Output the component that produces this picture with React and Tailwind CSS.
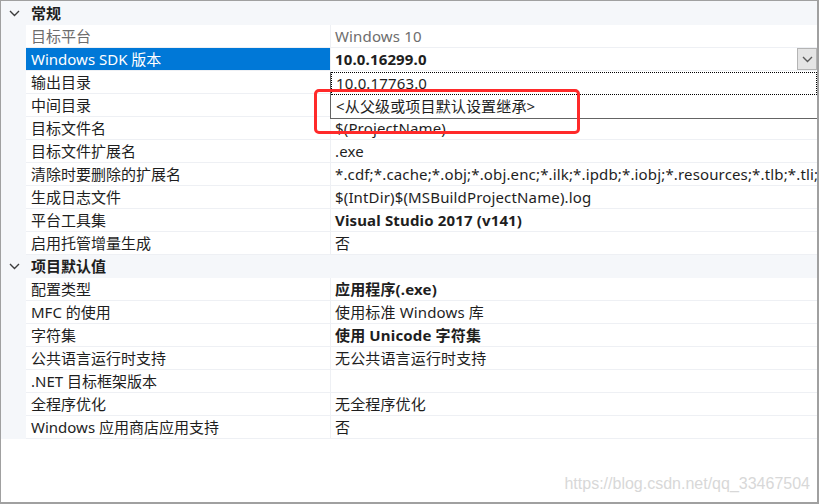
const font = { fontFamily: '"Noto Sans", "Noto Sans CJK SC", sans-serif' };

const general = [
  { label: "目标平台", value: "Windows 10", muted: true },
  { label: "Windows SDK 版本", value: "10.0.16299.0", bold: true, selected: true },
  { label: "输出目录", value: "" },
  { label: "中间目录", value: "" },
  { label: "目标文件名", value: "$(ProjectName)" },
  { label: "目标文件扩展名", value: ".exe" },
  {
    label: "清除时要删除的扩展名",
    value: "*.cdf;*.cache;*.obj;*.obj.enc;*.ilk;*.ipdb;*.iobj;*.resources;*.tlb;*.tli;*",
  },
  { label: "生成日志文件", value: "$(IntDir)$(MSBuildProjectName).log" },
  { label: "平台工具集", value: "Visual Studio 2017 (v141)", bold: true },
  { label: "启用托管增量生成", value: "否" },
];

const defaults = [
  { label: "配置类型", value: "应用程序(.exe)", bold: true },
  { label: "MFC 的使用", value: "使用标准 Windows 库" },
  { label: "字符集", value: "使用 Unicode 字符集", bold: true },
  { label: "公共语言运行时支持", value: "无公共语言运行时支持" },
  { label: ".NET 目标框架版本", value: "" },
  { label: "全程序优化", value: "无全程序优化" },
  { label: "Windows 应用商店应用支持", value: "否" },
];

function Chevron({ className }) {
  return (
    <svg className={className} width="11" height="7" viewBox="0 0 11 7">
      <path d="M1 1 L5.5 5.5 L10 1" fill="none" stroke="currentColor" strokeWidth="1.4" />
    </svg>
  );
}

function Section({ title }) {
  return (
    <div className="flex h-[23px] items-center bg-[#f5f7fa]">
      <div className="flex w-[25px] justify-center pl-[2px] text-[#3c3c3c]">
        <Chevron />
      </div>
      <div className="pl-[5px] text-[15px] font-bold text-[#1e1e1e]">{title}</div>
    </div>
  );
}

function Row({ item }) {
  return (
    <div className="flex h-[23px]">
      <div className="w-[25px] shrink-0 bg-[#f5f7fa]" />
      <div
        className={`flex w-[304px] shrink-0 items-center border-b border-[#eef0f4] pl-[5px] whitespace-nowrap ${
          item.selected
            ? "bg-[#0078d7] text-white"
            : item.muted
            ? "text-[#6d6d6d]"
            : "text-[#1e1e1e]"
        }`}
      >
        {item.label}
      </div>
      <div
        className={`relative flex min-w-0 flex-1 items-center overflow-hidden border-b border-l border-[#eef0f4] pl-[4px] whitespace-nowrap tracking-[0.15px] ${
          item.bold ? "font-bold" : ""
        } ${item.muted ? "text-[#6d6d6d]" : "text-[#1e1e1e]"}`}
      >
        {item.value}
        {item.selected && (
          <div className="absolute top-0 right-0 flex h-[22px] w-[20px] items-center justify-center border border-[#b4b4b4] bg-[#e5e5e5] text-[#5a5a5a]">
            <Chevron />
          </div>
        )}
      </div>
    </div>
  );
}

export default function App() {
  return (
    <div
      className="relative h-[504px] w-[819px] overflow-hidden border-t border-r-2 border-b-2 border-l border-[#a0a0a0] bg-white text-[15px] leading-none"
      style={font}
    >
      <div className="h-[1px] bg-[#f5f7fa]" />
      <Section title="常规" />
      {general.map((item) => (
        <Row key={item.label} item={item} />
      ))}
      <Section title="项目默认值" />
      {defaults.map((item) => (
        <Row key={item.label} item={item} />
      ))}

      {/* dropdown list */}
      <div className="absolute top-[71px] left-[329px] right-0 h-[47px] border-b border-l border-[#646464] bg-white text-[#1e1e1e] tracking-[0.15px]">
        <div className="flex h-[23px] items-center border border-dotted border-black pl-[4px]">
          10.0.17763.0
        </div>
        <div className="flex h-[23px] items-center pl-[5px]">&lt;从父级或项目默认设置继承&gt;</div>
      </div>

      {/* highlight box */}
      <div className="absolute top-[88px] left-[313px] h-[45px] w-[266px] rounded-[5px] border-[3px] border-[#ff2a2a]" />

      <div
        className="absolute right-[7px] bottom-[10px] text-[16px] text-[#d8d8d8]"
        style={{ fontFamily: '"Liberation Sans", Arial, sans-serif' }}
      >
        https://blog.csdn.net/qq_33467504
      </div>
    </div>
  );
}
